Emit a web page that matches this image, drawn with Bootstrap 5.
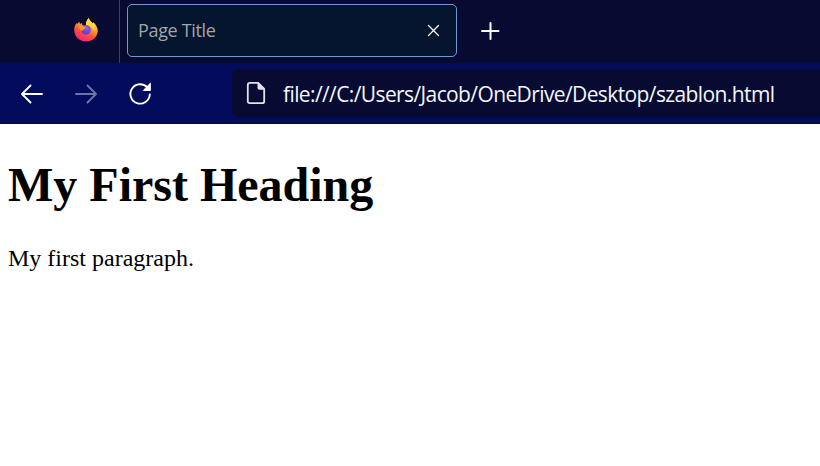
<!DOCTYPE html>
<html lang="en">
<head>
<meta charset="utf-8">
<meta name="viewport" content="width=device-width, initial-scale=1">
<title>Page Title</title>
<link href="https://cdn.jsdelivr.net/npm/bootstrap@5.3.0/dist/css/bootstrap.min.css" rel="stylesheet">
<style>
body { height: 466px; overflow: hidden; font-family: "Open Sans", "Noto Sans", sans-serif; }
.tab-strip { height: 63px; background: #070b32; }
.app-slot { width: 120px; height: 63px; border-right: 1px solid #3d4060; padding: 17px 0 0 74px; }
.page-tab { width: 330px; height: 53px; margin: 4px 0 0 7px; padding: 0 15px 0 10px; background: #05142f; border: 1px solid #7396d6; border-radius: 5px; }
.tab-label { font-size: 18px; line-height: 24px; color: #a2a5a9; letter-spacing: -.35px; margin-top: -2px; }
.new-tab { margin: 21px 0 0 23px; }
.tool-strip { height: 61px; background: #030b5c; border-bottom: 1px solid #070b32; padding: 6px 0 6px 20px; }
.tool-icons { width: 212px; gap: 30px; }
.address { height: 48px; background: #070b32; border-radius: 6px 0 0 6px; padding-left: 14px; }
.address-text { font-size: 21px; line-height: 28px; color: #f5f5fa; margin: 2px 0 0 17px; letter-spacing: -.61px; }
.document { padding: 33px 8px 0; font-family: "Liberation Serif", "Times New Roman", serif; color: #000; }
.document h1 { font-size: 48px; line-height: 55px; margin: 0 0 33px; font-weight: 700; }
.document p { font-size: 24px; line-height: 27px; margin: 0; }
svg { display: block; flex: none; }
</style>
</head>
<body class="bg-white">
<header>
  <div class="tab-strip d-flex align-items-start">
    <div class="app-slot flex-shrink-0">
      <svg width="24" height="25" viewBox="0 0 24 25">
        <defs>
          <linearGradient id="flame" x1=".8" y1="0" x2=".3" y2="1"><stop offset=".1" stop-color="#fff044"/><stop offset=".4" stop-color="#ffa02c"/><stop offset=".65" stop-color="#ff5040"/><stop offset="1" stop-color="#f5207c"/></linearGradient>
          <radialGradient id="globe" cx=".6" cy=".3" r=".8"><stop offset="0" stop-color="#a156f0"/><stop offset="1" stop-color="#4d3cc0"/></radialGradient>
        </defs>
        <path fill="url(#flame)" d="M14.800 1c.5 2.500 2.200 3.600 3.900 5.200l.6-.9c3 2.600 4.700 6 4.400 9.300C23.200 20.500 18.400 24.500 12 24.500 5.400 24.500.2 19.400.2 13c0-3 .9-5.200 2.500-7.100L3.100 7 5.400 4.800l.6 2.100 2-1c-.1 1.200.3 2 .9 2.700 1.200-.2 2.300 0 3.300.8-.8-3.200.2-6.300 2.600-8.400z"/>
        <path fill="#ffd935" d="M14.800 1c.6 2.500 2.400 3.600 4 5.500 2 2.400 2.300 5.200 1.200 7.800-.6-3.200-2.500-5.200-5.200-5.900-1-.3-1.800-.1-2.600.6-.6-3 .3-6 2.600-8z"/>
        <circle cx="12" cy="12.800" r="4.800" fill="url(#globe)"/>
        <path fill="#ff9a24" d="M4.500 9.500c2-1.500 4.200-1.400 5.800.2l1.900.3c-.3 1.200-1.300 1.700-2.200 2.100-.8.500-1.500 1-1.700 1.900-2-.2-3.300-1.800-3.800-4.500z"/>
      </svg>
    </div>
    <div class="page-tab d-flex align-items-center justify-content-between flex-shrink-0">
      <span class="tab-label">Page Title</span>
      <svg width="15" height="16" viewBox="0 0 15 16" stroke="#fff" stroke-width="1.300" stroke-linecap="round"><path d="M2.500 2.500l10 10M12.500 2.500l-10 10"/></svg>
    </div>
    <svg class="new-tab" width="20" height="20" viewBox="0 0 20 20" stroke="#fff" stroke-width="2" stroke-linecap="round"><path d="M10.500 2v16M2 10h16.500"/></svg>
  </div>
  <div class="tool-strip d-flex">
    <div class="tool-icons d-flex align-items-center flex-shrink-0">
      <svg width="24" height="24" viewBox="0 0 24 24" fill="none" stroke="#fff" stroke-width="1.900" stroke-linecap="round" stroke-linejoin="round"><path d="M22 13H2M10.500 4.500L2 13l8.500 8.500"/></svg>
      <svg width="24" height="24" viewBox="0 0 24 24" fill="none" stroke="#7073a3" stroke-width="1.900" stroke-linecap="round" stroke-linejoin="round"><path d="M2 13h20M13.500 4.500L22 13l-8.500 8.500"/></svg>
      <svg width="24" height="26" viewBox="0 0 24 26"><path fill="none" stroke="#fff" stroke-width="1.900" stroke-linecap="round" d="M21.800 14.500A9.700 9.700 0 1 1 19.500 7.600"/><path fill="#fff" d="M22.900 3.200v7q0 .7-.7.700h-6.500q-1.100 0-.4-.8l6.700-7q.9-.7.900.1z"/></svg>
    </div>
    <div class="address d-flex align-items-center flex-grow-1">
      <svg width="20" height="24" viewBox="0 0 20 24"><path fill="none" stroke="#e2e2ea" stroke-width="1.800" stroke-linejoin="round" d="M3.800 1.900h8.400l6 6v12.300q0 2-2 2H3.800q-2 0-2-2V3.900q0-2 2-2z"/><path fill="#e2e2ea" d="M11.500 1.500h1l6 6v1.300h-5q-2 0-2-2z"/></svg>
      <span class="address-text text-nowrap">file:///C:/Users/Jacob/OneDrive/Desktop/szablon.html</span>
    </div>
  </div>
</header>
<main class="document">
  <h1>My First Heading</h1>
  <p>My first paragraph.</p>
</main>
<script src="https://cdn.jsdelivr.net/npm/bootstrap@5.3.0/dist/js/bootstrap.bundle.min.js"></script>
</body>
</html>
